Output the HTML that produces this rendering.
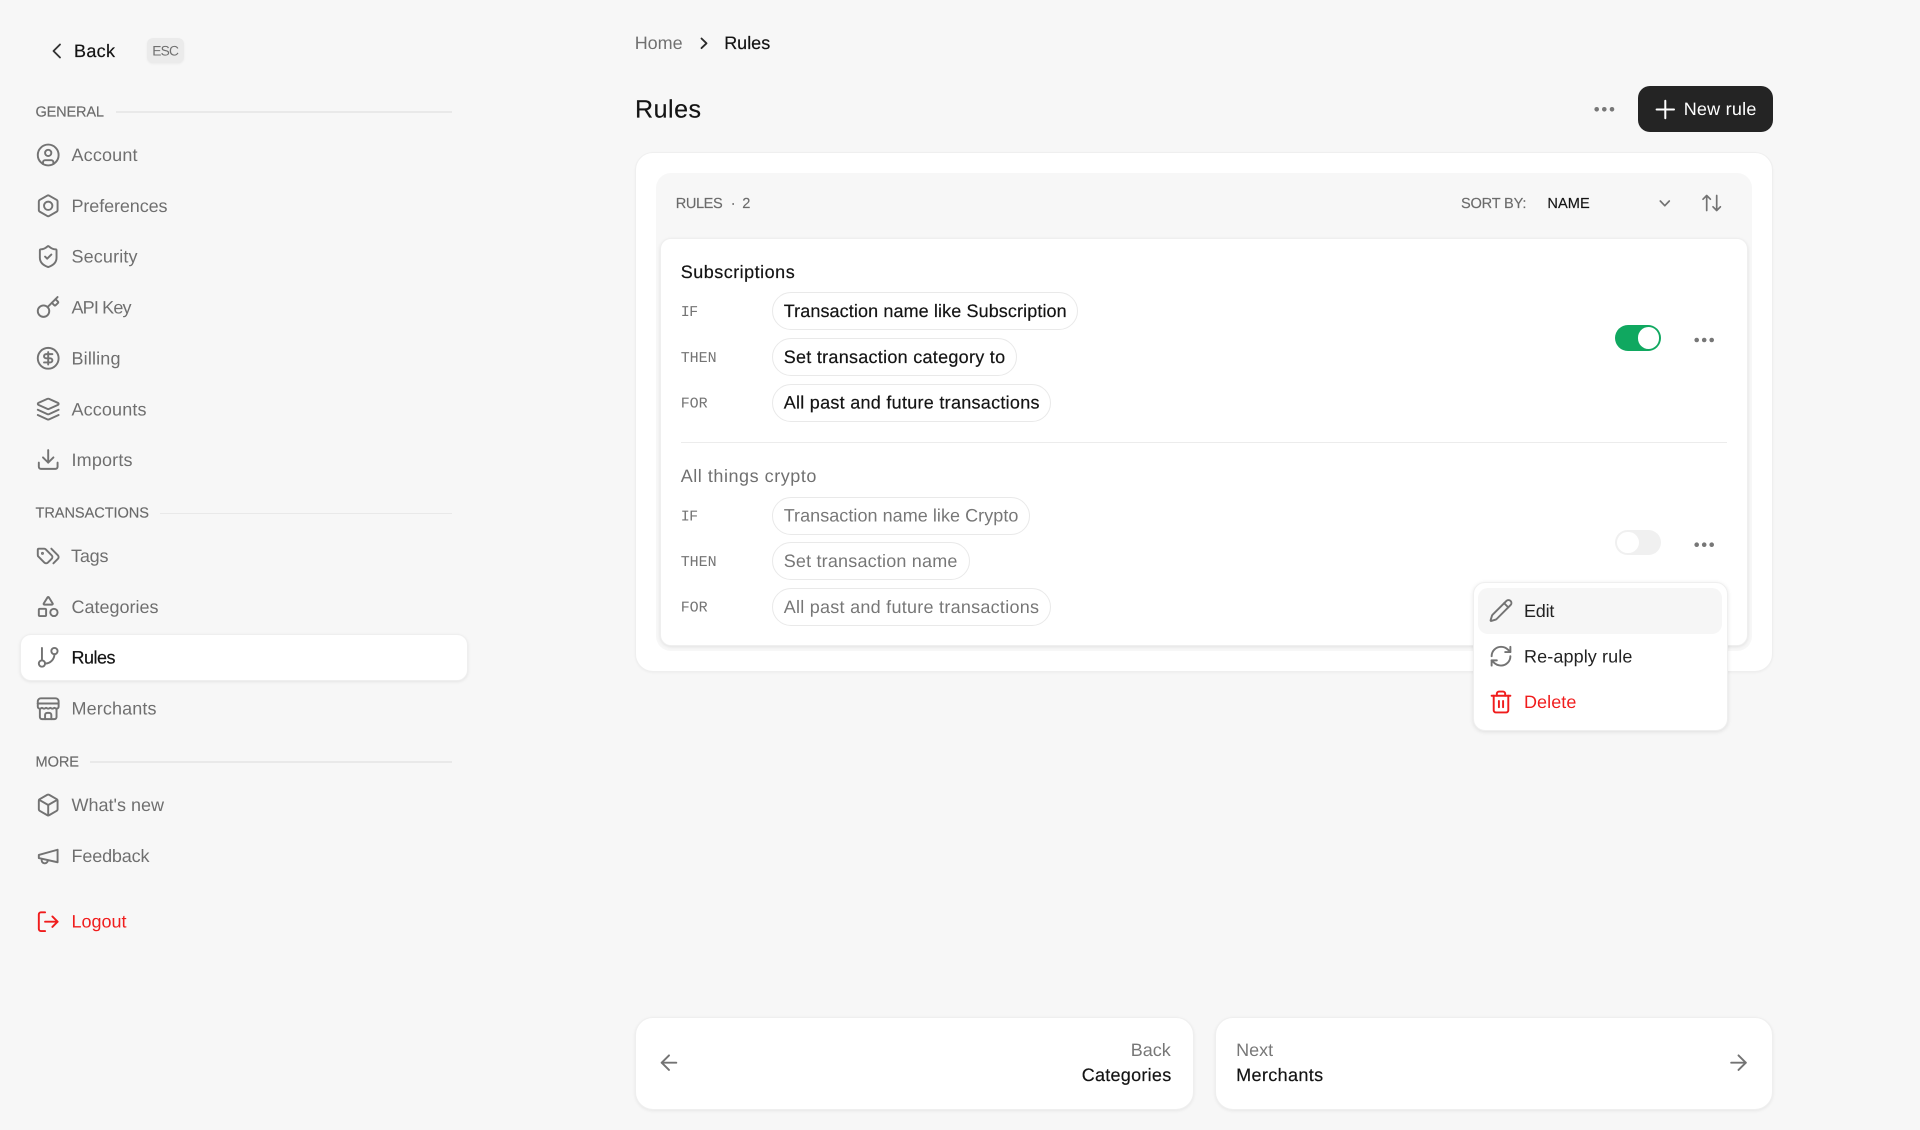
<!DOCTYPE html>
<html lang="en"><head><meta charset="utf-8"><title>Rules</title>
<style>
html,body{margin:0;padding:0;background:#f7f7f7;width:1920px;height:1130px;overflow:hidden}
.b{position:absolute;box-sizing:border-box}
.card{background:#fff;border:1px solid #efefef;box-shadow:0 1px 2px rgba(0,0,0,.04)}
.pill{background:#fff;border:1.5px solid #e9e9e9;border-radius:19px;height:38px;left:772px}
svg{position:absolute;left:0;top:0}
text{font-family:"Liberation Sans",sans-serif;font-size:18px;fill:#6f6f6f;text-rendering:geometricPrecision}
.d{fill:#141414;stroke:#141414;stroke-width:.2}.r{fill:#f01c1c}.l{font-size:14.6px;fill:#6b6b6b;stroke:#6b6b6b;stroke-width:.15}.m{font-family:"Liberation Mono",monospace;font-size:15px;fill:#747474}.g{fill:#707070}
.k{fill:#777}
g.i{fill:none;stroke:#737373;stroke-width:1.85;stroke-linecap:round;stroke-linejoin:round}
g.x{stroke:#f01c1c}
</style></head><body>
<div class="b" style="left:147px;top:38px;width:37px;height:25px;background:#ebebeb;border-radius:6px;box-shadow:0 1px 2px rgba(0,0,0,.05)"></div>
<div class="b" style="left:116px;top:111px;width:336px;height:1.5px;background:#e9e9e9"></div>
<div class="b" style="left:160px;top:512.5px;width:292px;height:1.5px;background:#e9e9e9"></div>
<div class="b" style="left:90px;top:761px;width:362px;height:1.5px;background:#e9e9e9"></div>
<div class="b card" style="left:19.5px;top:634px;width:448.5px;height:47px;border-radius:11px;box-shadow:0 1px 3px rgba(0,0,0,.08)"></div>
<div class="b" style="left:1637.5px;top:86px;width:135.5px;height:46px;background:#242424;border-radius:12px"></div>
<div class="b card" style="left:634.5px;top:152px;width:1138.5px;height:520px;border-radius:18px"></div>
<div class="b" style="left:656px;top:173px;width:1096px;height:478px;background:#f7f7f7;border-radius:15px"></div>
<div class="b card" style="left:660px;top:238px;width:1087.5px;height:408px;border-radius:11px;box-shadow:0 1px 3px rgba(0,0,0,.09)"></div>
<div class="b" style="left:681px;top:441.5px;width:1046px;height:1.5px;background:#ececec"></div>
<div class="b pill" style="top:292px;width:306px"></div>
<div class="b pill" style="top:338px;width:245px"></div>
<div class="b pill" style="top:383.5px;width:279px"></div>
<div class="b pill" style="top:496.5px;width:258px"></div>
<div class="b pill" style="top:542px;width:198px"></div>
<div class="b pill" style="top:587.5px;width:279px"></div>
<div class="b" style="left:1615px;top:325px;width:46px;height:25.5px;background:#10a860;border-radius:13px"></div>
<div class="b" style="left:1637.5px;top:327px;width:21.5px;height:21.5px;background:#fff;border-radius:50%"></div>
<div class="b" style="left:1615px;top:529.5px;width:46px;height:25.5px;background:#f0f0f0;border-radius:13px"></div>
<div class="b" style="left:1617px;top:531.5px;width:21.5px;height:21.5px;background:#fff;border-radius:50%"></div>
<div class="b card" style="left:1472.5px;top:582px;width:255px;height:149px;border-radius:12px;box-shadow:0 1px 4px rgba(0,0,0,.1)"></div>
<div class="b" style="left:1478px;top:588px;width:244px;height:45.5px;background:#f6f6f6;border-radius:10px"></div>
<div class="b card" style="left:635px;top:1016.5px;width:558.5px;height:93px;border-radius:18px;box-shadow:0 1px 3px rgba(0,0,0,.07)"></div>
<div class="b card" style="left:1214.5px;top:1016.5px;width:558px;height:93px;border-radius:18px;box-shadow:0 1px 3px rgba(0,0,0,.07)"></div>

<svg width="1920" height="1130" viewBox="0 0 1920 1130" xmlns="http://www.w3.org/2000/svg">
<g transform="translate(-.5 -.7)">
<text class="d" x="74.5" y="57.5" textLength="41">Back</text>
<text class="g" style="font-size:13.8px" x="152.8" y="56.4" textLength="26.7">ESC</text>
<text class="l" x="36" y="117" textLength="68.5">GENERAL</text>
<text x="72" y="161.7" textLength="66">Account</text>
<text x="72" y="212.5" textLength="96">Preferences</text>
<text x="72" y="263.4" textLength="66">Security</text>
<text x="72" y="314.3" textLength="60">API Key</text>
<text x="72" y="365.2" textLength="49">Billing</text>
<text x="72" y="416" textLength="75">Accounts</text>
<text x="72" y="466.6" textLength="61">Imports</text>
<text class="l" x="36" y="518.3" textLength="113.5">TRANSACTIONS</text>
<text x="71.5" y="562.7" textLength="37.5">Tags</text>
<text x="72" y="613.5" textLength="87">Categories</text>
<text class="d" x="72" y="664.2" textLength="44">Rules</text>
<text x="72" y="715" textLength="85">Merchants</text>
<text class="l" x="36" y="767.3" textLength="43.5">MORE</text>
<text x="72" y="811.7" textLength="92.5">What's new</text>
<text x="72" y="862.5" textLength="78">Feedback</text>
<text class="r" x="72" y="928.3" textLength="55">Logout</text>
</g>
<g transform="translate(-.3 -.5)">
<text class="g" x="635" y="49.7" textLength="48">Home</text>
<text class="d" x="724.5" y="49.7" textLength="46">Rules</text>
<text class="d" style="font-size:25px" x="635.3" y="118" textLength="66">Rules</text>
<text x="1684" y="115.5" style="fill:#fff" textLength="72.7">New rule</text>

<text class="l" x="676" y="208.5" textLength="47">RULES</text>
<text class="l" x="731" y="208.5">·</text>
<text class="l" x="742.5" y="208.5" textLength="9">2</text>
<text class="l" x="1461.3" y="208.5" textLength="65.4">SORT BY:</text>
<text class="l d" style="fill:#141414;stroke:#141414" x="1547.7" y="208.5" textLength="42.3">NAME</text>

<text class="d" x="681" y="278.3" textLength="114">Subscriptions</text>
<text class="m" x="681" y="316.7" textLength="17.5">IF</text>
<text class="d" x="784" y="317.5" textLength="283">Transaction name like Subscription</text>
<text class="m" x="681" y="362.3" textLength="36">THEN</text>
<text class="d" x="784" y="363.3" textLength="221.4">Set transaction category to</text>
<text class="m" x="681" y="408" textLength="27">FOR</text>
<text class="d" x="784" y="409" textLength="255.8">All past and future transactions</text>

<text class="g" x="681" y="482.7" textLength="135.7">All things crypto</text>
<text class="m" x="681" y="521" textLength="17.5">IF</text>
<text class="k" x="784" y="522" textLength="234.7">Transaction name like Crypto</text>
<text class="m" x="681" y="566.7" textLength="36">THEN</text>
<text class="k" x="784" y="567.7" textLength="173.7">Set transaction name</text>
<text class="m" x="681" y="612" textLength="27">FOR</text>
<text class="k" x="784" y="613.3" textLength="255.3">All past and future transactions</text>

<text style="fill:#222" x="1524.3" y="617.3" textLength="30.4">Edit</text>
<text style="fill:#222" x="1524.3" y="663" textLength="108.4">Re-apply rule</text>
<text class="r" x="1524.3" y="708.7" textLength="52.4">Delete</text>

<text class="k" x="1131" y="1056.7" textLength="40">Back</text>
<text class="d" x="1082" y="1081.7" textLength="89.5">Categories</text>
<text class="k" x="1236.4" y="1056.7" textLength="37">Next</text>
<text class="d" x="1236.4" y="1081.7" textLength="87">Merchants</text>
</g>

<!-- dots -->
<g fill="#777"><circle cx="1596.7" cy="109.3" r="2.3"/><circle cx="1604.3" cy="109.3" r="2.3"/><circle cx="1612" cy="109.3" r="2.3"/>
<circle cx="1696.7" cy="340" r="2.3"/><circle cx="1704.2" cy="340" r="2.3"/><circle cx="1711.7" cy="340" r="2.3"/>
<circle cx="1696.7" cy="544.7" r="2.3"/><circle cx="1704.2" cy="544.7" r="2.3"/><circle cx="1711.7" cy="544.7" r="2.3"/></g>

<!-- simple icons -->
<g class="i" style="stroke:#333"><path d="M60 44.500l-6.500 6.500 6.500 6.500"/></g>
<g class="i" style="stroke:#2b2b2b"><path d="M701.500 38.500l5 4.800-5 4.800"/></g>
<g class="i" style="stroke:#fff;stroke-width:2"><path d="M1665.3 100.8v17.4M1656.6 109.5h17.4"/></g>
<g class="i" style="stroke-width:1.7"><path d="M1660.3 201l4.500 4.700 4.500-4.700"/></g>
<g class="i" style="stroke-width:1.7"><path d="M1706.700 195.500v15M1703 199.200l3.700-3.700 3.700 3.700M1716.700 210.500v-15M1713 206.800l3.700 3.700 3.700-3.700"/></g>
<g class="i" transform="translate(656.5 1050.2) scale(1.0417)"><path d="m12 19-7-7 7-7"/><path d="M19 12H5"/></g>
<g class="i" transform="translate(1726 1050.2) scale(1.0417)"><path d="M5 12h14"/><path d="m12 5 7 7-7 7"/></g>

<!-- nav icons -->
<g class="i" transform="translate(35.7 142.5) scale(1.0417)"><circle cx="12" cy="12" r="10"/><circle cx="12" cy="10" r="3"/><path d="M7 20.662V19a2 2 0 0 1 2-2h6a2 2 0 0 1 2 2v1.662"/></g>
<g class="i" transform="translate(35.7 193.3) scale(1.0417)"><path d="M21 16V8a2 2 0 0 0-1-1.73l-7-4a2 2 0 0 0-2 0l-7 4A2 2 0 0 0 3 8v8a2 2 0 0 0 1 1.73l7 4a2 2 0 0 0 2 0l7-4A2 2 0 0 0 21 16z"/><circle cx="12" cy="12" r="4"/></g>
<g class="i" transform="translate(35.7 244.1) scale(1.0417)"><path d="M20 13c0 5-3.500 7.500-7.660 8.950a1 1 0 0 1-.67-.01C7.500 20.500 4 18 4 13V6a1 1 0 0 1 1-1c2 0 4.500-1.200 6.240-2.720a1.170 1.170 0 0 1 1.520 0C14.510 3.810 17 5 19 5a1 1 0 0 1 1 1z"/><path d="m9 12 2 2 4-4"/></g>
<g class="i" transform="translate(35.7 295) scale(1.0417)"><path d="m15.500 7.500 2.300 2.300a1 1 0 0 0 1.400 0l2.100-2.100a1 1 0 0 0 0-1.400L19 4"/><path d="m21 2-9.600 9.600"/><circle cx="7.500" cy="15.500" r="5.500"/></g>
<g class="i" transform="translate(35.7 345.8) scale(1.0417)"><circle cx="12" cy="12" r="10"/><path d="M16 8h-6a2 2 0 1 0 0 4h4a2 2 0 1 1 0 4H8"/><path d="M12 18V6"/></g>
<g class="i" transform="translate(35.7 396.6) scale(1.0417)"><path d="m12.830 2.180a2 2 0 0 0-1.660 0L2.600 6.080a1 1 0 0 0 0 1.830l8.580 3.910a2 2 0 0 0 1.660 0l8.580-3.900a1 1 0 0 0 0-1.830Z"/><path d="m22 17.650-9.170 4.160a2 2 0 0 1-1.660 0L2 17.650"/><path d="m22 12.650-9.170 4.160a2 2 0 0 1-1.660 0L2 12.650"/></g>
<g class="i" transform="translate(35.7 447) scale(1.0417)"><path d="M21 15v4a2 2 0 0 1-2 2H5a2 2 0 0 1-2-2v-4"/><path d="M7 10l5 5 5-5"/><path d="M12 15V3"/></g>
<g class="i" transform="translate(35.7 543.5) scale(1.0417)"><path d="m15 5 6.300 6.300a2.400 2.400 0 0 1 0 3.400L17 19"/><path d="M9.586 5.586A2 2 0 0 0 8.172 5H3a1 1 0 0 0-1 1v5.172a2 2 0 0 0 .586 1.414L8.290 18.290a2.426 2.426 0 0 0 3.420 0l3.580-3.580a2.426 2.426 0 0 0 0-3.420z"/><circle cx="6.500" cy="9.500" r=".5" fill="#737373"/></g>
<g class="i" transform="translate(35.7 594.2) scale(1.0417)"><path d="M8.300 10a.7.7 0 0 1-.626-1.079L11.400 3a.7.7 0 0 1 1.198-.043L16.300 8.900a.7.7 0 0 1-.572 1.100Z"/><rect x="3" y="14" width="7" height="7" rx="1"/><circle cx="17.500" cy="17.500" r="3.500"/></g>
<g class="i" transform="translate(35.7 644.8) scale(1.0417)"><path d="M6 3v12"/><circle cx="18" cy="6" r="3"/><circle cx="6" cy="18" r="3"/><path d="M18 9a9 9 0 0 1-9 9"/></g>
<g class="i" transform="translate(35.7 696.2) scale(1.0417)"><path d="M2 7V5a3 3 0 0 1 3-3h14a3 3 0 0 1 3 3v2"/><path d="M4 12v8a2 2 0 0 0 2 2h12a2 2 0 0 0 2-2v-8"/><path d="M15 22v-4a2 2 0 0 0-2-2h-2a2 2 0 0 0-2 2v4"/><path d="M2 7h20"/><path d="M22 7v3a2 2 0 0 1-2 2a2.700 2.700 0 0 1-1.590-.63.7.7 0 0 0-.82 0A2.700 2.700 0 0 1 16 12a2.700 2.700 0 0 1-1.590-.63.7.7 0 0 0-.82 0A2.700 2.700 0 0 1 12 12a2.700 2.700 0 0 1-1.590-.63.7.7 0 0 0-.82 0A2.700 2.700 0 0 1 8 12a2.700 2.700 0 0 1-1.590-.63.7.7 0 0 0-.82 0A2.700 2.700 0 0 1 4 12a2 2 0 0 1-2-2V7"/></g>
<g class="i" transform="translate(35.7 792.5) scale(1.0417)"><path d="M21 8a2 2 0 0 0-1-1.730l-7-4a2 2 0 0 0-2 0l-7 4A2 2 0 0 0 3 8v8a2 2 0 0 0 1 1.730l7 4a2 2 0 0 0 2 0l7-4A2 2 0 0 0 21 16Z"/><path d="m3.300 7 8.700 5 8.700-5"/><path d="M12 22V12"/></g>
<g class="i" transform="translate(35.7 843.5) scale(1.0417)"><path d="m3 11 18-5v12L3 14v-3z"/><path d="M11.600 16.800a3 3 0 1 1-5.800-1.600"/></g>
<g class="i x" transform="translate(35.7 909.2) scale(1.0417)"><path d="M9 21H5a2 2 0 0 1-2-2V5a2 2 0 0 1 2-2h4"/><path d="M16 17l5-5-5-5"/><path d="M21 12H9"/></g>

<!-- menu icons -->
<g class="i" transform="translate(1488.5 598) scale(1.0417)"><path d="M21.174 6.812a1 1 0 0 0-3.986-3.987L3.842 16.174a2 2 0 0 0-.5.83l-1.321 4.352a.5.5 0 0 0 .623.622l4.353-1.320a2 2 0 0 0 .83-.497z"/><path d="m15 5 4 4"/></g>
<g class="i" transform="translate(1488.5 643.7) scale(1.0417)"><path d="M3 12a9 9 0 0 1 9-9 9.750 9.750 0 0 1 6.740 2.740L21 8"/><path d="M21 3v5h-5"/><path d="M21 12a9 9 0 0 1-9 9 9.750 9.750 0 0 1-6.740-2.740L3 16"/><path d="M8 16H3v5"/></g>
<g class="i x" transform="translate(1488.5 689.5) scale(1.0417)"><path d="M3 6h18"/><path d="M19 6v14c0 1-1 2-2 2H7c-1 0-2-1-2-2V6"/><path d="M8 6V4c0-1 1-2 2-2h4c1 0 2 1 2 2v2"/><path d="M10 11v6"/><path d="M14 11v6"/></g>
</svg>
</body></html>
